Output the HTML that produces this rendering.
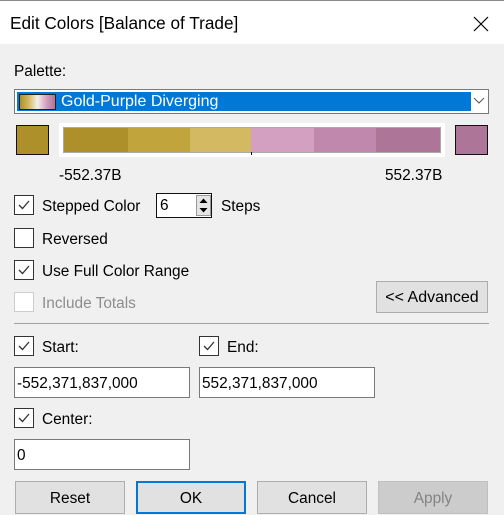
<!DOCTYPE html>
<html><head><style>
*{margin:0;padding:0;box-sizing:border-box}
body{width:504px;height:515px;background:#f0f0f0;font-family:"Liberation Sans",sans-serif;font-size:15.4px;color:#000;position:relative;overflow:hidden}
.a{position:absolute}
.title{left:0;top:0;width:504px;height:44px;background:#fff;border-top:1px solid #888}
.cb{position:absolute;width:20px;height:20px;border:1px solid #333;background:#fff}
.cb svg{position:absolute;left:2px;top:2px}
.lbl{position:absolute;line-height:20px;top:0}
.inp{position:absolute;height:31px;border:1px solid #7a7a7a;background:#fff;padding-left:2px;line-height:31px;font-size:15.4px}
.btn{position:absolute;top:481px;width:110px;height:33px;border:1px solid #adadad;background:#e1e1e1;text-align:center;line-height:33px}
</style></head><body>
<div class="a title"><div class="a" style="left:10px;top:12px;font-size:17.2px">Edit Colors [Balance of Trade]</div>
<svg class="a" style="left:473px;top:15px" width="16" height="16"><path d="M1 1L15 15M15 1L1 15" stroke="#000" stroke-width="1.2"/></svg></div>
<div class="lbl" style="left:14px;top:62px">Palette:</div>
<div class="a" style="left:14px;top:89px;width:475px;height:25px;border:1px solid #7a7a7a;background:#fff"></div>
<div class="a" style="left:17px;top:92px;width:454px;height:19px;background:#0078d7"></div>
<div class="a" style="left:19px;top:94px;width:37px;height:16px;border:1px solid #222;background:linear-gradient(90deg,#ad9029,#d4b963,#f3efe9,#d4a0c2,#ad7598)"></div>
<div class="lbl" style="left:61px;top:92px;color:#fff;font-size:16px">Gold-Purple Diverging</div>
<svg class="a" style="left:473px;top:97px" width="12" height="8"><path d="M1 1L6 6L11 1" stroke="#555" fill="none"/></svg>
<div class="a" style="left:16px;top:125px;width:33px;height:30px;border:1px solid #111;background:#ad9029"></div>
<div class="a" style="left:59px;top:123px;width:386px;height:34px;background:#fff"></div>
<div class="a" style="left:63px;top:127px;width:378px;height:26px;border:1px solid #aaa;display:flex">
<div style="flex:64;background:#ad9029"></div><div style="flex:62;background:#c1a43b"></div><div style="flex:62;background:#d4b963"></div><div style="flex:63;background:#d4a0c2"></div><div style="flex:62;background:#c088ad"></div><div style="flex:64;background:#ad7598"></div></div>
<div class="a" style="left:251px;top:152px;width:1px;height:3px;background:#000"></div>
<div class="a" style="left:455px;top:125px;width:33px;height:30px;border:1px solid #111;background:#ad7598"></div>
<div class="lbl" style="left:59px;top:166px">-552.37B</div>
<div class="lbl" style="left:385px;top:166px">552.37B</div>

<div class="cb" style="left:14px;top:195px"><svg width="14" height="14"><path d="M2 7L5.5 10.5L12 3" stroke="#333" fill="none" stroke-width="1.3"/></svg></div>
<div class="lbl" style="left:42px;top:197px">Stepped Color</div>
<div class="a" style="left:156px;top:193px;width:56px;height:25px;border:1px solid #111;background:#fff"><span style="position:absolute;left:3px;top:3px">6</span>
<div class="a" style="left:39px;top:1px;width:15px;height:21px;background:#e5e5e5;border:1px solid #999"></div>
<svg class="a" style="left:41px;top:3px" width="11" height="18"><path d="M1.5 6L5.5 1.5L9.5 6Z M1.5 11L5.5 15.5L9.5 11Z" fill="#000"/></svg></div>
<div class="lbl" style="left:221px;top:197px">Steps</div>

<div class="cb" style="left:14px;top:228px"></div>
<div class="lbl" style="left:42px;top:230px">Reversed</div>
<div class="cb" style="left:14px;top:260px"><svg width="14" height="14"><path d="M2 7L5.5 10.5L12 3" stroke="#333" fill="none" stroke-width="1.3"/></svg></div>
<div class="lbl" style="left:42px;top:262px">Use Full Color Range</div>
<div class="cb" style="left:14px;top:292px;border-color:#ccc"></div>
<div class="lbl" style="left:42px;top:294px;color:#8d8d8d">Include Totals</div>
<div class="a" style="left:376px;top:281px;width:112px;height:32px;border:1px solid #adadad;background:#e1e1e1;text-align:center;line-height:32px;font-size:16px">&lt;&lt; Advanced</div>
<div class="a" style="left:14px;top:323px;width:475px;height:1px;background:#a0a0a0"></div>

<div class="cb" style="left:14px;top:336px"><svg width="14" height="14"><path d="M2 7L5.5 10.5L12 3" stroke="#333" fill="none" stroke-width="1.3"/></svg></div>
<div class="lbl" style="left:42px;top:338px">Start:</div>
<div class="cb" style="left:199px;top:336px"><svg width="14" height="14"><path d="M2 7L5.5 10.5L12 3" stroke="#333" fill="none" stroke-width="1.3"/></svg></div>
<div class="lbl" style="left:227px;top:338px">End:</div>
<div class="inp" style="left:14px;top:367px;width:176px">-552,371,837,000</div>
<div class="inp" style="left:199px;top:367px;width:176px">552,371,837,000</div>
<div class="cb" style="left:14px;top:408px"><svg width="14" height="14"><path d="M2 7L5.5 10.5L12 3" stroke="#333" fill="none" stroke-width="1.3"/></svg></div>
<div class="lbl" style="left:42px;top:410px">Center:</div>
<div class="inp" style="left:14px;top:439px;width:176px">0</div>

<div class="btn" style="left:15px">Reset</div>
<div class="btn" style="left:136px;border:2px solid #0078d7;line-height:31px">OK</div>
<div class="btn" style="left:257px">Cancel</div>
<div class="btn" style="left:378px;background:#ccc;border-color:#bfbfbf;color:#838383">Apply</div>
</body></html>
